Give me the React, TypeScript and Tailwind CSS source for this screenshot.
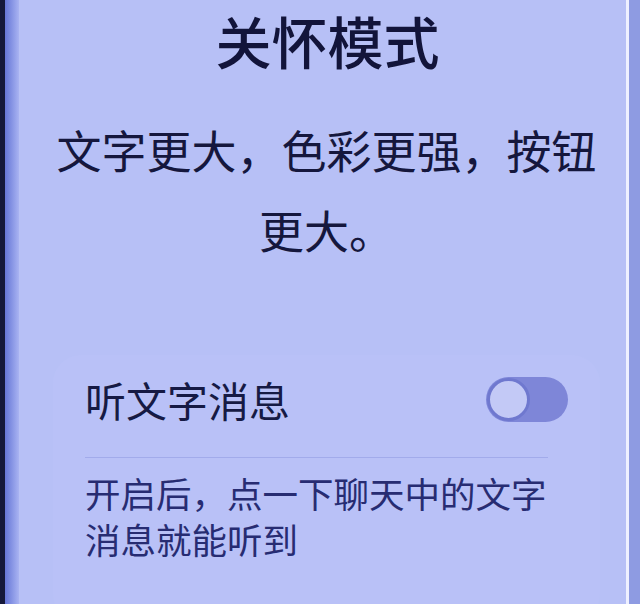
const CJK = { fontFamily: '"Noto Sans CJK SC", "Noto Sans", sans-serif' };

function Toggle() {
  return (
    <div className="relative w-[82px] h-[45px] rounded-full bg-[#7e86d8]">
      <div className="absolute left-[1px] top-[1px] w-[43px] h-[43px] rounded-full bg-[#c3c9f6] border-[3px] border-[#6f78cf]" />
    </div>
  );
}

export default function App() {
  return (
    <div className="flex w-[640px] h-[604px] overflow-hidden bg-[#b7c0f6]" style={CJK}>
      <div className="w-[5px] bg-[#15183a]" />
      <div className="w-[14px] bg-gradient-to-r from-[#6675d6] to-[#a9b3f2]" />
      <div className="flex-1 flex flex-col">
        <h1 className="pt-[6px] pl-[10px] text-center text-[56px] leading-[68px] font-medium text-[#12143a]">
          关怀模式
        </h1>
        <p className="mt-[36px] mx-auto w-[570px] pl-[8px] text-center text-[45px] leading-[80px] text-[#15173d]">
          文字更大，色彩更强，按钮更大。
        </p>
        <div className="mt-[85px] ml-[34px] mr-[26px] rounded-[28px] bg-[#b9c1f7] px-[32px] pt-[22px] pb-[60px]">
          <div className="flex items-center justify-between h-[45px]">
            <span className="text-[41px] leading-[45px] text-[#161a44]">听文字消息</span>
            <Toggle />
          </div>
          <div className="mt-[35px] h-[1px] bg-[#a2abeb] mr-[20px]" />
          <p className="mt-[12px] w-[480px] text-[35.5px] leading-[46px] text-[#272c72]">
            开启后，点一下聊天中的文字消息就能听到
          </p>
        </div>
      </div>
      <div className="w-[3px] bg-[#eef0ff]" />
      <div className="w-[11px] bg-[#8e9be2]" />
    </div>
  );
}
